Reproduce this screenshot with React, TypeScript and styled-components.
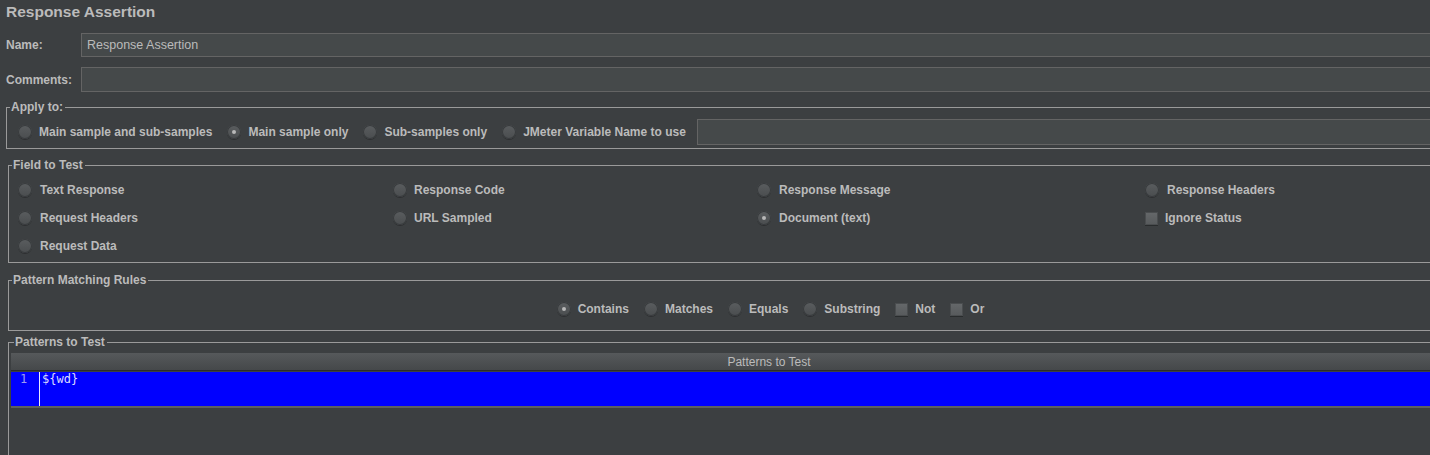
import React from "react";
import styled, { createGlobalStyle } from "styled-components";

const Global = createGlobalStyle`
  html, body {
    margin: 0;
    padding: 0;
    background: #3c3f41;
    overflow: hidden;
  }
  body {
    font-family: "Liberation Sans", Arial, sans-serif;
    color: #bbbbbb;
  }
`;

const Page = styled.div`
  width: 1536px;
  height: 455px;
  background: #3c3f41;
  display: flex;
  flex-direction: column;
`;

const Title = styled.div`
  height: 24px;
  line-height: 24px;
  padding-left: 6px;
  font-size: 15.5px;
  font-weight: bold;
  color: #bbbbbb;
`;

const FormRow = styled.div<{ $top: number; $h: number }>`
  display: flex;
  align-items: center;
  margin-top: ${(p) => p.$top}px;
  height: ${(p) => p.$h}px;
  padding-left: 6px;
  padding-right: 6px;
`;

const FieldLabel = styled.label`
  width: 75px;
  flex: none;
  font-size: 12px;
  font-weight: bold;
  color: #bbbbbb;
`;

const TextInput = styled.div`
  flex: 1;
  align-self: stretch;
  box-sizing: border-box;
  background: #45494a;
  border: 1px solid #646464;
  font-size: 12.5px;
  color: #bbbbbb;
  padding-left: 5px;
  display: flex;
  align-items: center;
`;

const Box = styled.fieldset<{ $top: number; $left: number; $pt: number; $pb: number; $pl?: number; $grow?: boolean }>`
  margin: ${(p) => p.$top}px 6px 0 ${(p) => p.$left}px;
  padding: ${(p) => p.$pt}px 0 ${(p) => p.$pb}px ${(p) => p.$pl ?? 0}px;
  border: 1px solid #9a9a9a;
  min-width: 0;
  ${(p) => (p.$grow ? "flex: 1; border-bottom: none;" : "")}
`;

const Legend = styled.legend`
  font-size: 12px;
  font-weight: bold;
  line-height: 14px;
  color: #bbbbbb;
  padding: 0 2px 0 1px;
  margin-left: 3px;
`;

const InlineRow = styled.div`
  display: flex;
  align-items: center;
  height: 26px;
  padding-left: 11px;
  gap: 15px;
`;

const CenterRow = styled.div`
  display: flex;
  align-items: center;
  justify-content: center;
  height: 26px;
  gap: 15px;
  padding-left: 3px;
`;

const Grid = styled.div`
  display: grid;
  grid-template-columns: 375px 364px 388px 1fr;
  grid-auto-rows: 28px;
  padding-left: 9px;
  align-items: center;
`;

const Option = styled.label<{ $gap?: number }>`
  display: flex;
  align-items: center;
  gap: ${(p) => p.$gap ?? 7}px;
  font-size: 12px;
  font-weight: bold;
  color: #bbbbbb;
  white-space: nowrap;
`;

const RadioDot = styled.span<{ $on?: boolean }>`
  width: 14px;
  height: 14px;
  flex: none;
  box-sizing: border-box;
  border-radius: 50%;
  background: linear-gradient(#5a5d5f, #4a4d4f);
  box-shadow: inset 0 0 0 1px #383b3d, 0 1px 0 rgba(0, 0, 0, 0.25);
  display: flex;
  align-items: center;
  justify-content: center;
  &::after {
    content: "";
    display: ${(p) => (p.$on ? "block" : "none")};
    width: 4px;
    height: 4px;
    border-radius: 50%;
    background: #b8b8b8;
  }
`;

const CheckSquare = styled.span`
  width: 13px;
  height: 13px;
  flex: none;
  box-sizing: border-box;
  background: linear-gradient(#646769, #585b5d);
  border: 1px solid #4a4d4f;
  box-shadow: 0 1px 0 rgba(0, 0, 0, 0.3);
`;

const VarInput = styled.div`
  flex: 1;
  height: 26px;
  box-sizing: border-box;
  background: #45494a;
  border: 1px solid #646464;
  margin-left: -4px;
  margin-right: 4px;
`;

const Table = styled.div`
  margin-right: 2px;
  display: flex;
  flex-direction: column;
`;

const TableHeader = styled.div`
  height: 17px;
  background: linear-gradient(#56595b, #45484a);
  border-bottom: 1px solid #2b2b2b;
  font-size: 12px;
  color: #bbbbbb;
  display: flex;
  align-items: center;
  justify-content: center;
`;

const BlueRow = styled.div`
  height: 34px;
  margin-top: 1px;
  background: #0000ff;
  border-bottom: 2px solid #5c5f61;
  display: flex;
  font-family: "DejaVu Sans Mono", "Liberation Mono", monospace;
  font-size: 12px;
`;

const Gutter = styled.div`
  width: 29px;
  flex: none;
  box-sizing: border-box;
  border-right: 1px solid #e8e8ff;
  color: #9c9cf0;
  padding-left: 9px;
`;

const Code = styled.div`
  padding-left: 2px;
  color: #dcdcff;
`;

function Radio({ label, on, gap }: { label: string; on?: boolean; gap?: number }) {
  return (
    <Option $gap={gap}>
      <RadioDot $on={on} />
      {label}
    </Option>
  );
}

function Check({ label, gap }: { label: string; gap?: number }) {
  return (
    <Option $gap={gap}>
      <CheckSquare />
      {label}
    </Option>
  );
}

export default function App() {
  return (
    <Page>
      <Global />
      <Title>Response Assertion</Title>
      <FormRow $top={9} $h={24}>
        <FieldLabel>Name:</FieldLabel>
        <TextInput>Response Assertion</TextInput>
      </FormRow>
      <FormRow $top={10} $h={25}>
        <FieldLabel>Comments:</FieldLabel>
        <TextInput />
      </FormRow>

      <Box $top={8} $left={6} $pt={5} $pb={3}>
        <Legend>Apply to:</Legend>
        <InlineRow>
          <Radio label="Main sample and sub-samples" />
          <Radio label="Main sample only" on />
          <Radio label="Sub-samples only" />
          <Radio label="JMeter Variable Name to use" />
          <VarInput />
        </InlineRow>
      </Box>

      <Box $top={9} $left={8} $pt={4} $pb={2}>
        <Legend>Field to Test</Legend>
        <Grid>
          <Radio label="Text Response" gap={8} />
          <Radio label="Response Code" gap={7} />
          <Radio label="Response Message" gap={8} />
          <Radio label="Response Headers" gap={8} />
          <Radio label="Request Headers" gap={8} />
          <Radio label="URL Sampled" gap={7} />
          <Radio label="Document (text)" on gap={8} />
          <Check label="Ignore Status" gap={7} />
          <Radio label="Request Data" gap={8} />
        </Grid>
      </Box>

      <Box $top={10} $left={8} $pt={9} $pb={8}>
        <Legend>Pattern Matching Rules</Legend>
        <CenterRow>
          <Radio label="Contains" on />
          <Radio label="Matches" />
          <Radio label="Equals" />
          <Radio label="Substring" />
          <Check label="Not" />
          <Check label="Or" />
        </CenterRow>
      </Box>

      <Box $top={4} $left={8} $pt={4} $pb={0} $pl={2} $grow>
        <Legend>Patterns to Test</Legend>
        <Table>
          <TableHeader>Patterns to Test</TableHeader>
          <BlueRow>
            <Gutter>1</Gutter>
            <Code>{"${wd}"}</Code>
          </BlueRow>
        </Table>
      </Box>
    </Page>
  );
}
